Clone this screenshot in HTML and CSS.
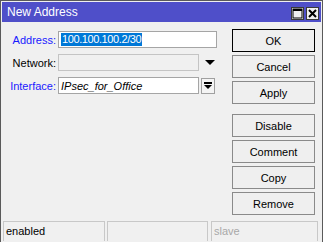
FILE: index.html
```html
<!DOCTYPE html>
<html lang="en">
<head>
    <meta charset="UTF-8">
    <title>New Address</title>
    <link rel="stylesheet" href="styles.css">
</head>
<body>
    <div class="window">
        <!-- Barra de título -->
        <div class="titlebar">
            <span class="title">New Address</span>
            <div class="title-buttons">
                <span class="tb-btn">
                    <svg width="11" height="11" viewBox="0 0 11 11"><rect x="1" y="1" width="9" height="9" fill="none" stroke="#000" stroke-width="1"/><line x1="1" y1="2" x2="10" y2="2" stroke="#000" stroke-width="2"/></svg>
                </span>
                <span class="tb-btn">
                    <svg width="11" height="11" viewBox="0 0 11 11"><path d="M2 2 L9 9 M9 2 L2 9" stroke="#000" stroke-width="2"/></svg>
                </span>
            </div>
        </div>

        <div class="content">
            <!-- Campos -->
            <div class="form">
                <div class="row">
                    <label class="label link">Address:</label>
                    <div class="field wide"><span class="selected">100.100.100.2/30</span></div>
                </div>
                <div class="row">
                    <label class="label">Network:</label>
                    <div class="field disabled"></div>
                    <span class="drop-arrow">
                        <svg width="10" height="6" viewBox="0 0 10 6"><path d="M0 0 L10 0 L5 5 Z" fill="#000"/></svg>
                    </span>
                </div>
                <div class="row">
                    <label class="label link">Interface:</label>
                    <div class="field"><span class="italic">IPsec_for_Office</span></div>
                    <span class="pick-btn">
                        <svg width="8" height="8" viewBox="0 0 8 8"><rect x="0" y="0" width="8" height="2" fill="#000"/><path d="M0 3 L8 3 L4 7 Z" fill="#000"/></svg>
                    </span>
                </div>
            </div>

            <!-- Botões -->
            <div class="actions">
                <button class="btn default">OK</button>
                <button class="btn">Cancel</button>
                <button class="btn">Apply</button>
                <button class="btn spaced">Disable</button>
                <button class="btn">Comment</button>
                <button class="btn">Copy</button>
                <button class="btn">Remove</button>
            </div>
        </div>

        <!-- Barra de status -->
        <div class="statusbar">
            <div class="pane first">enabled</div>
            <div class="pane middle"></div>
            <div class="pane muted">slave</div>
        </div>
    </div>
</body>
</html>
```

FILE: styles.css
```css
body {
    margin: 0;
    padding: 0;
    background-color: #ffffff;
    font-family: "Liberation Sans", Arial, sans-serif;
    font-size: 11px;
}
.window {
    width: 323px;
    height: 242px;
    box-sizing: border-box;
    border: 1px solid #5a5a5a;
    border-bottom: none;
    padding: 1px 1px 0 1px;
    background-color: #f0f0f0;
    display: flex;
    flex-direction: column;
}
.titlebar {
    height: 20px;
    background-color: #4f4fc9; /* azul da barra */
    display: flex;
    align-items: center;
    justify-content: space-between;
    padding-left: 5px;
}
.title {
    color: #ffffff;
    font-size: 12px;
}
.title-buttons {
    display: flex;
    gap: 2px;
    margin-top: 3px;
    margin-right: 2px;
}
.tb-btn {
    width: 13px;
    height: 13px;
    box-sizing: border-box;
    border: 1px solid #3a3a3a;
    background-color: #f0f0f0;
    display: flex;
    align-items: center;
    justify-content: center;
}
.content {
    display: flex;
    justify-content: space-between;
}
.form {
    padding-top: 9px;
    display: flex;
    flex-direction: column;
    gap: 6px;
}
.row {
    display: flex;
    align-items: center;
    height: 17px;
}
.label {
    width: 54px;
    text-align: right;
    padding-right: 2px;
    color: #000000;
}
.label.link {
    color: #1a1aff;
}
.field {
    width: 141px;
    height: 17px;
    box-sizing: border-box;
    border: 1px solid #a5a5a5;
    background-color: #ffffff;
    display: flex;
    align-items: center;
    padding-left: 2px;
    overflow: hidden;
    white-space: nowrap;
}
.field.wide {
    width: 159px;
}
.field.disabled {
    background-color: #f0f0f0;
    border-color: #c4c4c4;
}
.selected {
    background-color: #0078d7;
    color: #ffffff;
    padding: 0 1px;
    line-height: 13px;
    letter-spacing: -0.4px;
}
.italic {
    font-style: italic;
}
.drop-arrow {
    margin-left: 6px;
    display: flex;
}
.pick-btn {
    margin-left: 2px;
    width: 14px;
    height: 16px;
    box-sizing: border-box;
    border: 1px solid #a0a0a0;
    background-color: #f4f4f4;
    display: flex;
    align-items: center;
    justify-content: center;
}
.actions {
    width: 83px;
    margin-right: 6px;
    padding-top: 7px;
    display: flex;
    flex-direction: column;
    gap: 3px;
}
.btn {
    height: 23px;
    box-sizing: border-box;
    border: 1px solid #8a8a8a;
    background-color: #efefef;
    font-family: "Liberation Sans", Arial, sans-serif;
    font-size: 11px;
    color: #000000;
    padding: 0;
}
.btn.default {
    border-color: #000000;
}
.btn.spaced {
    margin-top: 7px;
}
.statusbar {
    margin-top: auto;
    display: flex;
    padding: 0 3px 1px 1px;
}
.pane {
    flex: 1;
    height: 20px;
    box-sizing: border-box;
    border: 1px solid #c8c8c8;
    border-bottom: none;
    padding-left: 2px;
    line-height: 19px;
}
.pane.first {
    flex: 0 0 102px;
}
.pane.middle {
    flex: 0 0 101px;
    margin-left: 2px;
}
.pane.muted {
    margin-left: 3px;
    color: #a8a8a8;
}
```
